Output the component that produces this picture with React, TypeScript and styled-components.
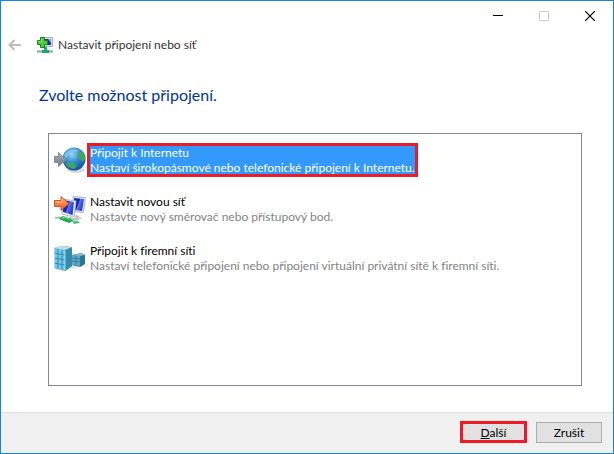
import React, { useState } from "react";
import styled, { createGlobalStyle, css } from "styled-components";

const GlobalStyle = createGlobalStyle`
  * { box-sizing: border-box; }
  body { margin: 0; }
  body, button {
    font-family: Lato, "Segoe UI", "Open Sans", sans-serif;
    font-size: 12px;
    font-variant-ligatures: none;
    line-height: 15px;
  }
`;

const highlight = css`
  border: 3px solid #ed1c24;
`;

const Dialog = styled.main`
  display: flex;
  flex-direction: column;
  min-height: 100vh;
  border: 1px solid #1883d7;
  background: #fff;
  color: #000;
`;

const TitleBar = styled.div`
  display: flex;
  justify-content: flex-end;
  height: 29px;
`;

const WindowButton = styled.button`
  display: grid;
  place-items: center;
  width: 46px;
  padding: 0;
  border: 0;
  background: transparent;
`;

const Header = styled.header`
  display: flex;
  align-items: center;
  height: 30px;
  padding-left: 7px;
  color: #333;
`;

const BackButton = styled.button`
  display: flex;
  margin-right: 15px;
  padding: 0;
  border: 0;
  background: transparent;
`;

const Title = styled.span`
  margin-left: 5px;
  padding-bottom: 1px;
`;

const Heading = styled.h1`
  margin: 23px 38px 26px;
  color: #003399;
  font-size: 16px;
  font-weight: 400;
  line-height: 24px;
`;

const OptionList = styled.ul`
  flex: 1;
  margin: 0 31px 26px 47px;
  padding: 3px 5px;
  border: 1px solid #828790;
  list-style: none;
`;

const OptionButton = styled.button`
  display: flex;
  align-items: center;
  gap: 4px;
  height: 49px;
  max-width: 100%;
  padding: 0 0 1px;
  border: 0;
  background: transparent;
  text-align: left;
  white-space: nowrap;
`;

const OptionText = styled.span<{ $selected: boolean }>`
  position: relative;
  display: flex;
  flex-direction: column;
  padding-bottom: 2px;
  color: ${(p) => (p.$selected ? "#fff" : "#000")};
  background: ${(p) => (p.$selected ? "#3399ff" : "transparent")};
  ${(p) =>
    p.$selected &&
    css`
      &::after {
        content: "";
        position: absolute;
        inset: -2px -3px 0;
        ${highlight}
      }
    `}
`;

const Description = styled.span<{ $selected: boolean }>`
  color: ${(p) => (p.$selected ? "#fff" : "#838383")};
`;

const Footer = styled.footer`
  display: flex;
  align-items: center;
  justify-content: flex-end;
  gap: 9px;
  height: 41px;
  padding: 0 11px 2px;
  border-top: 1px solid #dfdfdf;
  background: #f0f0f0;
`;

const ActionButton = styled.button<{ $highlighted?: boolean }>`
  width: 66px;
  height: 21px;
  padding: 0;
  border: 1px solid #adadad;
  background: #e1e1e1;
  color: #000;
  ${(p) =>
    p.$highlighted &&
    css`
      width: 67px;
      height: 22px;
      ${highlight}
    `}
`;

const BackIcon = () => (
  <svg width="14" height="12" viewBox="0 0 14 12" fill="none" stroke="#bdbdbd" strokeWidth="2">
    <path d="M13 6H2M6.500 1L1.500 6L6.500 11" />
  </svg>
);

const NetworkIcon = () => (
  <svg width="16" height="16" viewBox="0 0 16 16">
    <path d="M5.500 .5h10v9h-9z" fill="#dfe2e2" stroke="#a7adad" />
    <path d="M8 2h6v6H8z" fill="#2626bd" />
    <path d="M11 2h3v4z" fill="#8fa3ee" />
    <path d="M0 13h16v3H0z" fill="#c3cfcc" />
    <path d="M0 14h16v1H0z" fill="#72b99a" />
    <path d="M7 10h3v3h2v3H5v-3h2z" fill="#18ab65" />
    <path d="M3.500 .5h4v3h3v4h-3v3h-4v-3h-3v-4h3z" fill="#4fd033" stroke="#138326" />
    <path d="M4.500 1.500v3h-3" fill="none" stroke="#8be56c" />
  </svg>
);

const GlobeIcon = () => (
  <svg width="32" height="32" viewBox="0 0 32 32">
    <defs>
      <radialGradient id="ocean" cx="40%" cy="28%" r="75%">
        <stop offset="0" stopColor="#9fd6f8" />
        <stop offset=".45" stopColor="#3a91d5" />
        <stop offset="1" stopColor="#104d99" />
      </radialGradient>
      <linearGradient id="steel" x2="0" y2="1">
        <stop stopColor="#b0b4b8" />
        <stop offset="1" stopColor="#70757e" />
      </linearGradient>
    </defs>
    <ellipse cx="22" cy="25" rx="9" ry="3" fill="#d9dadd" />
    <circle cx="20" cy="14" r="11.500" fill="url(#ocean)" />
    <path d="M12 7c2-3 6-4 9-3l-1 3-3 1-2 3-3 2-2-2z" fill="#4fa9cf" opacity=".8" />
    <path d="M25 5c4 2 6 5 6 9l-2 3-3-3-3-3 2-3z" fill="#42a95b" />
    <path d="M14 17l5 1 4 3-3 3-4-1-4-3z" fill="#3fa762" />
    <path d="M10 10c3-5 10-7 16-4-5 0-9 1-14 7z" fill="#d8f2ff" opacity=".35" />
    <path d="M.5 11.500h4v-4l7.500 7-7.500 7v-4h-4z" fill="url(#steel)" stroke="#898e95" />
  </svg>
);

const NewNetworkIcon = () => (
  <svg width="32" height="32" viewBox="0 0 32 32">
    <defs>
      <linearGradient id="screen" x2="1" y2=".5">
        <stop stopColor="#1635b1" />
        <stop offset=".5" stopColor="#101fbd" />
        <stop offset=".55" stopColor="#5d78ed" />
        <stop offset="1" stopColor="#2334cb" />
      </linearGradient>
      <linearGradient id="orange" x2="0" y2="1">
        <stop stopColor="#ffb16d" />
        <stop offset="1" stopColor="#ee5618" />
      </linearGradient>
    </defs>
    <path d="M19 2.500l12.500 1-2 15-10.500-1z" fill="#e5e9ec" stroke="#afbac4" />
    <path d="M20 4l10 1-2 12-8-1z" fill="url(#screen)" />
    <path d="M8 5l14 2-2 16-12-3z" fill="#eef0f3" stroke="#afbac4" />
    <path d="M9 6l11 2-1.500 13L9 18z" fill="url(#screen)" />
    <path d="M18 22l-2 2 8 2 3-2-4-2z" fill="#e0e2e5" stroke="#c0c4c8" />
    <path d="M1 24c6-3 10 4 18 2 4-1 6-3 3-4" fill="none" stroke="#b8bec2" strokeWidth="2" />
    <path d="M5 24l4-2 7 2 3 3-4 2-8-3z" fill="#21ad56" />
    <path d="M8 24l3-1 4 2" fill="none" stroke="#a0edaf" />
    <path d="M18 27h6l2 2-6 1z" fill="#53c478" />
    <path d="M.5 6.500h6.500v-4l8 7-8 7v-4H.5z" fill="url(#orange)" stroke="#cd5726" />
    <path d="M2 8h6V5" fill="none" stroke="#ffc086" />
  </svg>
);

const CompanyIcon = () => (
  <svg width="32" height="32" viewBox="0 0 32 32">
    <path d="M10 25l9-3 11 0-11 4z" fill="#e2e7ea" />
    <path d="M18 12l9-2 4 2v9l-5 3-8-2z" fill="#2e7391" />
    <path d="M18 12l8 1v11l-8-2z" fill="#58aac9" />
    <path d="M18 12l9-2 4 2-5 1z" fill="#8ab9c9" />
    <path d="M18 15l8 1M18 18l8 1M22 13v10" stroke="#347e9a" />
    <path d="M0 5l8-2 10 1v19l-7 5-11-3z" fill="#39a0cd" />
    <path d="M0 5l11 2v21l-11-3z" fill="#6fcbed" />
    <path d="M11 7l7-3v19l-7 5z" fill="#3789ab" />
    <path d="M0 5l8-2 10 1-7 3z" fill="#c4dbe5" />
    <path d="M0 10l11 2 7-3M0 15l11 2 7-3M0 20l11 2 7-3M4 6v20M8 7v20M15 6v19" fill="none" stroke="#3489ad" />
    <path d="M.5 6v19M11 8v19" stroke="#a1dcef" />
  </svg>
);

const options = [
  {
    title: "Připojit k Internetu",
    description: "Nastaví širokopásmové nebo telefonické připojení k Internetu.",
    Icon: GlobeIcon,
  },
  {
    title: "Nastavit novou síť",
    description: "Nastavte nový směrovač nebo přístupový bod.",
    Icon: NewNetworkIcon,
  },
  {
    title: "Připojit k firemní síti",
    description: "Nastaví telefonické připojení nebo připojení virtuální privátní sítě k firemní síti.",
    Icon: CompanyIcon,
  },
];

export default function App() {
  const [selected, setSelected] = useState(0);

  return (
    <>
      <GlobalStyle />
      <Dialog>
        <TitleBar>
          <WindowButton aria-label="Minimalizovat">
            <svg width="10" height="11" viewBox="0 0 10 11">
              <path d="M0 5.500h10" stroke="#000" />
            </svg>
          </WindowButton>
          <WindowButton aria-label="Maximalizovat" disabled>
            <svg width="10" height="10" viewBox="0 0 10 10">
              <path d="M.5 .5h9v9h-9z" fill="none" stroke="#ccc" />
            </svg>
          </WindowButton>
          <WindowButton aria-label="Zavřít">
            <svg width="10" height="10" viewBox="0 0 10 10">
              <path d="M0 0l10 10M10 0L0 10" stroke="#000" strokeWidth="1.200" />
            </svg>
          </WindowButton>
        </TitleBar>
        <Header>
          <BackButton aria-label="Zpět" disabled>
            <BackIcon />
          </BackButton>
          <NetworkIcon />
          <Title>Nastavit připojení nebo síť</Title>
        </Header>
        <Heading>Zvolte možnost připojení.</Heading>
        <OptionList>
          {options.map(({ title, description, Icon }, index) => (
            <li key={title}>
              <OptionButton aria-pressed={selected === index} onClick={() => setSelected(index)}>
                <Icon />
                <OptionText $selected={selected === index}>
                  <span>{title}</span>
                  <Description $selected={selected === index}>{description}</Description>
                </OptionText>
              </OptionButton>
            </li>
          ))}
        </OptionList>
        <Footer>
          <ActionButton $highlighted>
            <u>D</u>alší
          </ActionButton>
          <ActionButton>Zrušit</ActionButton>
        </Footer>
      </Dialog>
    </>
  );
}
